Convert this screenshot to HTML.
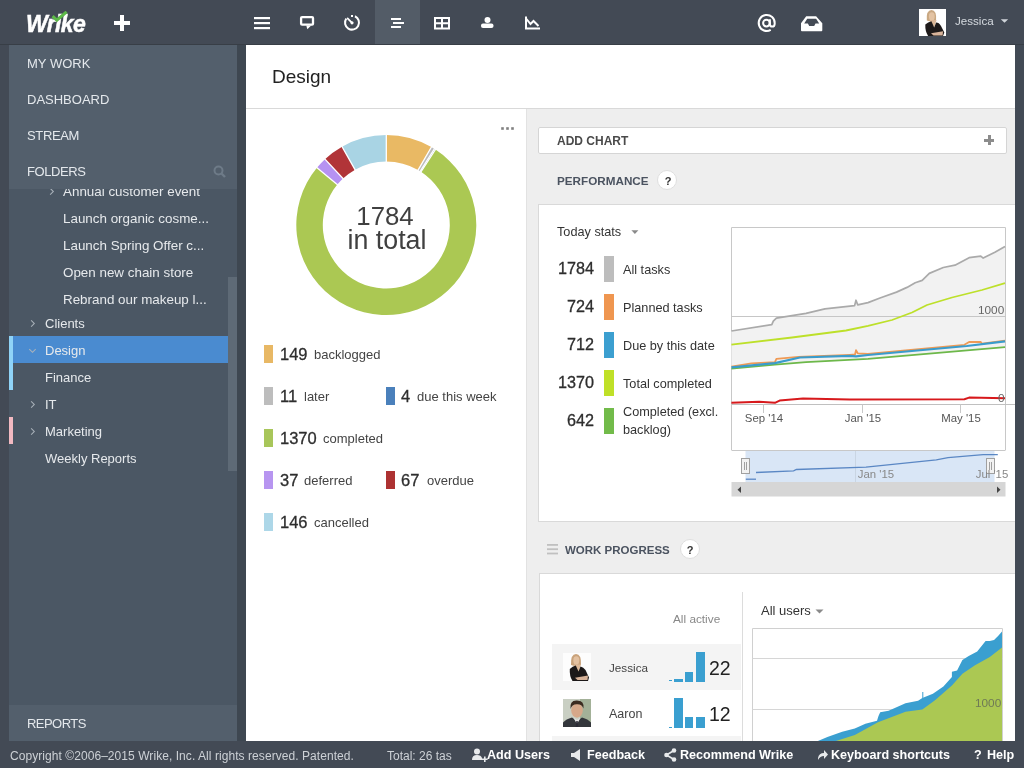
<!DOCTYPE html>
<html><head><meta charset="utf-8">
<style>
*{margin:0;padding:0;box-sizing:border-box}
html,body{width:1024px;height:768px;overflow:hidden;background:#434a55;font-family:"Liberation Sans",sans-serif}
.a{position:absolute;will-change:transform}
#top{left:0;top:0;width:1024px;height:45px;background:#434a55}
#side{left:9px;top:45px;width:228px;height:696px;background:#4b5764;overflow:hidden}
#strip{left:237px;top:45px;width:9px;height:696px;background:#3e4751}
#sidetop{left:0;top:0;width:228px;height:144px;background:#535f6c}
.sh{left:18px;color:#e4e8ec;font-size:13px;line-height:16px}
.fi{color:#e6e9ec;font-size:13.4px;line-height:16px;white-space:nowrap}
.chev{width:5px;height:5px;border-right:1px solid #aab2bb;border-bottom:1px solid #aab2bb;transform:rotate(-45deg)}
#main{left:246px;top:45px;width:769px;height:696px;background:#fff}
#foot{left:0;top:741px;width:1024px;height:27px;background:#434a55;color:#cdd1d6;font-size:12px;line-height:14px}
.fb{color:#fff;font-weight:bold;font-size:12.6px;line-height:14px}
</style></head><body>
<div id="strip" class="a"></div>
<div id="top" class="a">
  <div class="a" style="left:26px;top:9.7px;color:#fff;font:italic bold 23px/28px 'Liberation Sans',sans-serif;letter-spacing:-0.6px;-webkit-text-stroke:0.5px #fff">Wrike</div>
  <svg class="a" style="left:50px;top:11px" width="20" height="14" viewBox="0 0 20 14"><path d="M2.6 5.2 L6.8 9.2 L16.6 0.8" stroke="#5cb848" stroke-width="3" fill="none"/></svg>
  <div class="a" style="left:114px;top:21px;width:16px;height:4px;background:#fff"></div>
  <div class="a" style="left:120px;top:15px;width:4px;height:16px;background:#fff"></div>
  <!-- icons -->
  <div class="a" style="left:375px;top:0;width:45px;height:45px;background:#535c67"></div>
  <svg class="a" style="left:0;top:0" width="1024" height="45">
    <g fill="#fff">
      <rect x="254" y="17" width="16" height="2.2"/><rect x="254" y="22" width="16" height="2.2"/><rect x="254" y="27" width="16" height="2.2"/>
      <rect x="391" y="18" width="10" height="2"/><rect x="393" y="22" width="11" height="2"/><rect x="391" y="26" width="10" height="2"/>
      <circle cx="487.5" cy="20" r="3"/><rect x="481" y="23.5" width="12.5" height="4.5" rx="2"/>
    </g>
    <g fill="none" stroke="#fff" stroke-width="2">
      <rect x="301.1" y="17.05" width="11.9" height="7.6" rx="1" stroke-width="2.3"/>
      <path d="M354.96 16.26 A7 7 0 1 1 346.27 18.58"/>
      <rect x="435" y="18" width="14" height="10.5"/><path d="M435 23.2 h14 M442 18 v10.5"/>
      <path d="M526 16.5 v12 h14 M526.5 19 l4 5 l3 -3 l5 5"/>
    </g>
    <path d="M347.6 18.4 L351.8 22.6" stroke="#fff" stroke-width="1.8" stroke-linecap="round"/><circle cx="352" cy="22.8" r="1.6" fill="#fff"/>
    <rect x="351" y="15" width="2" height="2" fill="#fff"/><path d="M306.3 25.5 L307.3 29.2 L311.2 25.5z" fill="#fff"/>
    <path d="M806.2 16.2 H816.1 L822.3 23.3 V30.3 Q822.3 31.2 821.4 31.2 H801.9 Q801 31.2 801 30.3 V23.3z M807.2 18.7 L804.2 23.4 H807.9 L809.2 26 H814.2 L815.5 23.4 H819.2 L816.1 18.7z" fill="#fff" fill-rule="evenodd"/>
    <path d="M1000.8 19.2 h7.4 l-3.7 3.6z" fill="#d0d5da"/>
  </svg>
  <svg class="a" style="left:0;top:0" width="1024" height="45"><g fill="none" stroke="#fff" stroke-width="2"><path d="M770.7 29.9 A8 8 0 1 1 774.7 23.4 Q774.7 26.6 772.1 26.6 Q769.9 26.6 769.9 24.2 V19.3"/><circle cx="766.4" cy="23.1" r="3.3"/></g></svg>
  <svg class="a" style="left:919px;top:9px" width="27" height="27" viewBox="0 0 27 27"><rect width="27" height="27" fill="#fff"/><path d="M7.8 11.5 Q7 1 12.5 0.9 Q17.8 1 17.1 11.7 Q12.5 13.5 7.8 11.5z" fill="#c9a882"/><ellipse cx="12.8" cy="7.5" rx="2.9" ry="4.2" fill="#e3c3a3"/><path d="M10.5 11 H17.5 L15.2 19z" fill="#dcb898"/><path d="M6.3 15.5 Q9 13 12.4 12.3 L15.2 18.5 L17.1 13.6 Q20 13.6 22 17 L25.3 23.4 L24 27 H9.1 Q6 22 6.3 15.5z" fill="#1e1a1a"/><path d="M12 24.3 L24.1 22.3 L23.6 26.5 L14.5 26.5z" fill="#d7b39a"/></svg>
  <div class="a" style="left:955px;top:13.7px;color:#d6dbe0;font-size:11.6px;line-height:14px">Jessica</div>
</div>
<div id="side" class="a">
  <div class="a" style="left:0;top:144px;width:228px;height:516px;overflow:hidden">
    <div class="a fi" style="left:54px;top:-5.5px">Annual customer event</div>
    <div class="a chev" style="left:39px;top:0px"></div>
    <div class="a fi" style="left:54px;top:22.25px">Launch organic cosme...</div>
    <div class="a fi" style="left:54px;top:49px">Launch Spring Offer c...</div>
    <div class="a fi" style="left:54px;top:76px">Open new chain store</div>
    <div class="a fi" style="left:54px;top:103px">Rebrand our makeup l...</div>
    <div class="a chev" style="left:20px;top:132px"></div>
    <div class="a fi" style="left:36px;top:127.25px;font-size:13px">Clients</div>
    <div class="a" style="left:0;top:147px;width:219px;height:27px;background:#4a8bd0"></div>
    <div class="a" style="left:0;top:147px;width:4px;height:54px;background:#8fd3f7"></div>
    <div class="a chev" style="left:21px;top:157.5px;transform:rotate(45deg)"></div>
    <div class="a fi" style="left:36px;top:154.25px;font-size:13px">Design</div>
    <div class="a fi" style="left:36px;top:181px;font-size:13px">Finance</div>
    <div class="a chev" style="left:20px;top:213px"></div>
    <div class="a fi" style="left:36px;top:208px;font-size:13px">IT</div>
    <div class="a" style="left:0;top:228px;width:4px;height:27px;background:#f2b9c1"></div>
    <div class="a chev" style="left:20px;top:240px"></div>
    <div class="a fi" style="left:36px;top:235px;font-size:13px">Marketing</div>
    <div class="a fi" style="left:36px;top:262px;font-size:13px">Weekly Reports</div>
    <div class="a" style="left:219px;top:88px;width:9px;height:194px;background:#5e6a76"></div>
  </div>
  <div id="sidetop" class="a">
    <div class="a sh" style="top:10.8px">MY WORK</div>
    <div class="a sh" style="top:46.8px">DASHBOARD</div>
    <div class="a sh" style="top:82.8px;letter-spacing:-0.35px">STREAM</div>
    <div class="a sh" style="top:118.8px;letter-spacing:-0.4px">FOLDERS</div>
    <svg class="a" style="left:204px;top:120px" width="14" height="14"><circle cx="5.5" cy="5.5" r="4" stroke="#6e7b88" stroke-width="2" fill="none"/><path d="M8.5 8.5 l3.5 3.5" stroke="#6e7b88" stroke-width="2.4"/></svg>
  </div>
  <div class="a" style="left:0;top:660px;width:228px;height:36px;background:#535f6c">
    <div class="a sh" style="top:11.2px;letter-spacing:-0.55px">REPORTS</div>
  </div>
</div>
<div id="foot" class="a">
  <div class="a" style="left:10px;top:8px;letter-spacing:0.06px">Copyright ©2006–2015 Wrike, Inc. All rights reserved. Patented.</div>
  <div class="a" style="left:387px;top:8px">Total: 26 tas</div>
  <svg class="a" style="left:0;top:0" width="1024" height="27">
    <g fill="#e8eaec">
      <circle cx="477" cy="10.5" r="3"/><path d="M472 19 q0 -5 5 -5 q4 0 5 3 v2z"/><path d="M480 17.5 h4 v-2 h1.6 v2 h2 v1.6 h-2 v2 h-1.6 v-2 h-4z"/>
      <path d="M571 12 h3 l6 -4 v12 l-6 -4 h-3z"/>
      <circle cx="666.5" cy="14" r="2.3"/><circle cx="674" cy="9.5" r="2.3"/><circle cx="674" cy="18.5" r="2.3"/>
      <path d="M818 17 q1 -5 6 -5 v-3 l4 4.5 l-4 4.5 v-3 q-4 0 -6 4z"/>
    </g>
    <path d="M666.5 14 L674 9.5 M666.5 14 L674 18.5" stroke="#e8eaec" stroke-width="1.6"/>
  </svg>
  <div class="a fb" style="left:487px;top:7px">Add Users</div>
  <div class="a fb" style="left:587px;top:7px">Feedback</div>
  <div class="a fb" style="left:680px;top:7px">Recommend Wrike</div>
  <div class="a fb" style="left:831px;top:7px">Keyboard shortcuts</div>
  <div class="a fb" style="left:974px;top:7px">?</div>
  <div class="a fb" style="left:987px;top:7px">Help</div>
</div>
<div class="a" style="left:246px;top:45px;width:769px;height:696px;overflow:hidden;background:#fff"><div class="a" style="left:-246px;top:-45px;width:1024px;height:768px">
<div class="a" style="left:272.00px;top:65.52px;font-size:19px;line-height:22.80px;color:#222;white-space:nowrap;">Design</div>
<div class="a" style="left:246px;top:108px;width:769px;height:1px;background:#d9d9d9;"></div>
<div class="a" style="left:527px;top:109px;width:488px;height:632px;background:#eeeeee;"></div>
<div class="a" style="left:526px;top:109px;width:1px;height:632px;background:#e2e2e2;"></div>
<svg class="a" style="left:0;top:0" width="1024" height="768">
<rect x="501.2" y="127.2" width="2.6" height="2.6" fill="#808080"/><rect x="506.2" y="127.2" width="2.6" height="2.6" fill="#808080"/><rect x="511.2" y="127.2" width="2.6" height="2.6" fill="#808080"/><path d="M386.30 135.00 A90 90 0 0 1 431.39 147.11 L418.11 170.04 A63.5 63.5 0 0 0 386.30 161.50Z" fill="#e9b964"/>
<path d="M431.39 147.11 A90 90 0 0 1 434.37 148.92 L420.22 171.32 A63.5 63.5 0 0 0 418.11 170.04Z" fill="#bcbcbc"/>
<path d="M434.37 148.92 A90 90 0 0 1 435.44 149.60 L420.97 171.80 A63.5 63.5 0 0 0 420.22 171.32Z" fill="#4a81bc"/>
<path d="M435.44 149.60 A90 90 0 1 1 316.91 167.69 L337.34 184.56 A63.5 63.5 0 1 0 420.97 171.80Z" fill="#abc853"/>
<path d="M316.91 167.69 A90 90 0 0 1 324.94 159.16 L343.01 178.55 A63.5 63.5 0 0 0 337.34 184.56Z" fill="#b692f2"/>
<path d="M324.94 159.16 A90 90 0 0 1 342.03 146.64 L355.07 169.71 A63.5 63.5 0 0 0 343.01 178.55Z" fill="#b13438"/>
<path d="M342.03 146.64 A90 90 0 0 1 386.30 135.00 L386.30 161.50 A63.5 63.5 0 0 0 355.07 169.71Z" fill="#a9d4e4"/>
<path d="M386.30 162.50 L386.30 134.00" stroke="#fff" stroke-width="1.3"/>
<path d="M417.61 170.91 L431.89 146.25" stroke="#fff" stroke-width="1.3"/>
<path d="M419.69 172.16 L434.91 148.07" stroke="#fff" stroke-width="1.3"/>
<path d="M420.43 172.64 L435.99 148.76" stroke="#fff" stroke-width="1.3"/>
<path d="M338.11 185.20 L316.13 167.05" stroke="#fff" stroke-width="1.3"/>
<path d="M343.69 179.28 L324.26 158.43" stroke="#fff" stroke-width="1.3"/>
<path d="M355.56 170.58 L341.54 145.77" stroke="#fff" stroke-width="1.3"/>
</svg>
<div class="a" style="left:184.50px;width:400px;text-align:center;top:200.58px;font-size:25.8px;line-height:30.96px;color:#404040;white-space:nowrap;">1784</div>
<div class="a" style="left:186.50px;width:400px;text-align:center;top:223.93px;font-size:26.8px;line-height:32.16px;color:#404040;white-space:nowrap;">in total</div>
<div class="a" style="left:264px;top:345px;width:9px;height:18px;background:#e8b865;"></div>
<div class="a" style="left:279.80px;top:344.78px;font-size:16.5px;line-height:19.80px;color:#2e2e2e;white-space:nowrap;-webkit-text-stroke:0.3px #2e2e2e">149</div>
<div class="a" style="left:313.60px;top:347.20px;font-size:13px;line-height:15.60px;color:#444;white-space:nowrap;">backlogged</div>
<div class="a" style="left:264px;top:387px;width:9px;height:18px;background:#bdbdbd;"></div>
<div class="a" style="left:279.80px;top:386.78px;font-size:16.5px;line-height:19.80px;color:#2e2e2e;white-space:nowrap;-webkit-text-stroke:0.3px #2e2e2e">11</div>
<div class="a" style="left:304.20px;top:389.20px;font-size:13px;line-height:15.60px;color:#444;white-space:nowrap;">later</div>
<div class="a" style="left:386px;top:387px;width:9px;height:18px;background:#4a80bb;"></div>
<div class="a" style="left:400.50px;top:386.78px;font-size:16.5px;line-height:19.80px;color:#2e2e2e;white-space:nowrap;-webkit-text-stroke:0.3px #2e2e2e">4</div>
<div class="a" style="left:416.80px;top:389.20px;font-size:13px;line-height:15.60px;color:#444;white-space:nowrap;">due this week</div>
<div class="a" style="left:264px;top:429px;width:9px;height:18px;background:#a8c65a;"></div>
<div class="a" style="left:279.80px;top:428.78px;font-size:16.5px;line-height:19.80px;color:#2e2e2e;white-space:nowrap;-webkit-text-stroke:0.3px #2e2e2e">1370</div>
<div class="a" style="left:323.00px;top:431.20px;font-size:13px;line-height:15.60px;color:#444;white-space:nowrap;">completed</div>
<div class="a" style="left:264px;top:471px;width:9px;height:18px;background:#b795f0;"></div>
<div class="a" style="left:279.80px;top:470.78px;font-size:16.5px;line-height:19.80px;color:#2e2e2e;white-space:nowrap;-webkit-text-stroke:0.3px #2e2e2e">37</div>
<div class="a" style="left:304.20px;top:473.20px;font-size:13px;line-height:15.60px;color:#444;white-space:nowrap;">deferred</div>
<div class="a" style="left:386px;top:471px;width:9px;height:18px;background:#ad3232;"></div>
<div class="a" style="left:400.50px;top:470.78px;font-size:16.5px;line-height:19.80px;color:#2e2e2e;white-space:nowrap;-webkit-text-stroke:0.3px #2e2e2e">67</div>
<div class="a" style="left:426.50px;top:473.20px;font-size:13px;line-height:15.60px;color:#444;white-space:nowrap;">overdue</div>
<div class="a" style="left:264px;top:513px;width:9px;height:18px;background:#add7e8;"></div>
<div class="a" style="left:279.80px;top:512.78px;font-size:16.5px;line-height:19.80px;color:#2e2e2e;white-space:nowrap;-webkit-text-stroke:0.3px #2e2e2e">146</div>
<div class="a" style="left:313.60px;top:515.20px;font-size:13px;line-height:15.60px;color:#444;white-space:nowrap;">cancelled</div>
<div class="a" style="left:538px;top:127px;width:469px;height:27px;background:#fff;border:1px solid #d5d5d5;border-radius:2px;box-sizing:border-box"></div>
<div class="a" style="left:557.00px;top:134.04px;font-size:12px;line-height:14.40px;color:#4a4a4a;font-weight:bold;white-space:nowrap;">ADD CHART</div>
<div class="a" style="left:984px;top:138.5px;width:10px;height:3px;background:#8c8c8c;"></div>
<div class="a" style="left:987.5px;top:135px;width:3px;height:10px;background:#8c8c8c;"></div>
<div class="a" style="left:556.50px;top:174.43px;font-size:11.7px;line-height:14.04px;color:#4b5360;font-weight:bold;white-space:nowrap;">PERFORMANCE</div>
<div class="a" style="left:657px;top:170px;width:20px;height:20px;border-radius:50%;background:#fff;border:1px solid #dedede"></div>
<div class="a" style="left:467.60px;width:400px;text-align:center;top:174.79px;font-size:11px;line-height:13.20px;color:#333;font-weight:bold;white-space:nowrap;">?</div>
<div class="a" style="left:538px;top:204px;width:490px;height:318px;background:#fff;border:1px solid #d9d9d9;box-sizing:border-box"></div>
<div class="a" style="left:557.00px;top:225.48px;font-size:12.7px;line-height:15.24px;color:#333;white-space:nowrap;">Today stats</div>
<svg class="a" style="left:631px;top:230px" width="10" height="6"><path d="M0.4 0.3 h7 l-3.5 3.6z" fill="#8a8a8a"/></svg>
<div class="a" style="right:429.50px;top:259.27px;font-size:16.2px;line-height:19.44px;color:#2e2e2e;white-space:nowrap;-webkit-text-stroke:0.3px #2e2e2e">1784</div>
<div class="a" style="left:604px;top:256px;width:10px;height:26px;background:#bdbdbd;"></div>
<div class="a" style="left:623.40px;top:262.58px;font-size:12.7px;line-height:15.24px;color:#333;white-space:nowrap;">All tasks</div>
<div class="a" style="right:429.50px;top:297.27px;font-size:16.2px;line-height:19.44px;color:#2e2e2e;white-space:nowrap;-webkit-text-stroke:0.3px #2e2e2e">724</div>
<div class="a" style="left:604px;top:294px;width:10px;height:26px;background:#ef9650;"></div>
<div class="a" style="left:623.40px;top:300.58px;font-size:12.7px;line-height:15.24px;color:#333;white-space:nowrap;">Planned tasks</div>
<div class="a" style="right:429.50px;top:335.27px;font-size:16.2px;line-height:19.44px;color:#2e2e2e;white-space:nowrap;-webkit-text-stroke:0.3px #2e2e2e">712</div>
<div class="a" style="left:604px;top:332px;width:10px;height:26px;background:#3c9fd0;"></div>
<div class="a" style="left:623.40px;top:338.58px;font-size:12.7px;line-height:15.24px;color:#333;white-space:nowrap;">Due by this date</div>
<div class="a" style="right:429.50px;top:373.27px;font-size:16.2px;line-height:19.44px;color:#2e2e2e;white-space:nowrap;-webkit-text-stroke:0.3px #2e2e2e">1370</div>
<div class="a" style="left:604px;top:370px;width:10px;height:26px;background:#bfe028;"></div>
<div class="a" style="left:623.40px;top:376.58px;font-size:12.7px;line-height:15.24px;color:#333;white-space:nowrap;">Total completed</div>
<div class="a" style="right:429.50px;top:411.27px;font-size:16.2px;line-height:19.44px;color:#2e2e2e;white-space:nowrap;-webkit-text-stroke:0.3px #2e2e2e">642</div>
<div class="a" style="left:604px;top:408px;width:10px;height:26px;background:#72bb4a;"></div>
<div class="a" style="left:623.40px;top:405.18px;font-size:12.7px;line-height:15.24px;color:#333;white-space:nowrap;">Completed (excl.</div>
<div class="a" style="left:623.40px;top:422.88px;font-size:12.7px;line-height:15.24px;color:#333;white-space:nowrap;">backlog)</div>
<svg class="a" style="left:546px;top:543px" width="12" height="12"><g fill="#c0c0c0"><rect x="1" y="1" width="11" height="1.8"/><rect x="1" y="5.3" width="11" height="1.8"/><rect x="1" y="9.6" width="11" height="1.8"/></g></svg>
<div class="a" style="left:565.00px;top:543.62px;font-size:11.5px;line-height:13.80px;color:#4b5360;font-weight:bold;white-space:nowrap;">WORK PROGRESS</div>
<div class="a" style="left:679.5px;top:539px;width:20px;height:20px;border-radius:50%;background:#fff;border:1px solid #dedede"></div>
<div class="a" style="left:490.00px;width:400px;text-align:center;top:543.79px;font-size:11px;line-height:13.20px;color:#333;font-weight:bold;white-space:nowrap;">?</div>
<div class="a" style="left:538.5px;top:573px;width:490px;height:200px;background:#fff;border:1px solid #d9d9d9;box-sizing:border-box"></div>
<svg class="a" style="left:0;top:0" width="1024" height="768">
<path d="M731.5 450 V227.5 H1005.5 V450" fill="none" stroke="#c8c8c8" stroke-width="1"/>
<polygon points="731.4,331.0 771.8,324.7 773.3,321.2 776.4,318.1 806.0,313.4 824.9,308.8 854.6,305.6 856.0,300.2 857.7,304.8 868.0,302.6 880.0,298.0 896.5,292.1 907.0,287.4 915.2,282.7 922.2,280.4 929.3,273.4 943.3,267.5 955.0,265.2 969.1,257.7 980.8,256.2 983.2,258.1 994.9,252.3 1005.0,246.5 1005.0,347.2 868.0,358.9 806.0,362.2 774.9,364.7 731.4,368.6" fill="#f2f2f2"/>
<path d="M731.5 316.5 H1005.5" stroke="#c6c6c6" stroke-width="1"/>
<path d="M731.5 404.5 H1015" stroke="#c0c0c0" stroke-width="1"/>
<path d="M763.5 404.5 V413" stroke="#c8c8c8" stroke-width="1"/><path d="M862.5 404.5 V413" stroke="#c8c8c8" stroke-width="1"/><path d="M960.5 404.5 V413" stroke="#c8c8c8" stroke-width="1"/><polyline points="731.4,331.0 771.8,324.7 773.3,321.2 776.4,318.1 806.0,313.4 824.9,308.8 854.6,305.6 856.0,300.2 857.7,304.8 868.0,302.6 880.0,298.0 896.5,292.1 907.0,287.4 915.2,282.7 922.2,280.4 929.3,273.4 943.3,267.5 955.0,265.2 969.1,257.7 980.8,256.2 983.2,258.1 994.9,252.3 1005.0,246.5" fill="none" stroke="#aaaaaa" stroke-width="1.7" stroke-linejoin="round"/>
<polyline points="731.4,344.7 792.0,337.5 846.0,330.5 868.0,325.8 892.0,320.0 912.0,312.5 927.0,305.0 952.0,297.5 982.0,290.0 1005.0,283.2" fill="none" stroke="#bde02a" stroke-width="1.8" stroke-linejoin="round"/>
<polyline points="731.4,368.6 774.9,364.7 806.0,362.2 868.0,358.9 1005.0,347.2" fill="none" stroke="#6db84a" stroke-width="1.8" stroke-linejoin="round"/>
<polyline points="731.4,366.6 751.4,363.4 774.9,362.2 776.4,358.8 798.3,356.9 849.9,354.8 855.0,354.5 856.0,350.2 857.7,353.3 868.0,354.0 964.4,344.8 969.1,342.0 980.8,342.0 982.0,343.7 1005.0,340.6" fill="none" stroke="#ef9a55" stroke-width="1.8" stroke-linejoin="round"/>
<polyline points="731.4,367.3 774.9,363.1 799.9,357.5 849.9,355.9 856.0,356.4 868.0,355.0 966.8,346.0 1005.0,341.3" fill="none" stroke="#3a9ccc" stroke-width="2.2" stroke-linejoin="round"/>
<polyline points="731.4,402.8 759.2,401.7 774.9,402.8 779.6,400.6 803.0,398.6 849.9,399.4 964.4,399.2 969.1,397.6 1005.0,398.3" fill="none" stroke="#d7191c" stroke-width="2" stroke-linejoin="round"/>
<path d="M731.5 450.5 H1005.5" stroke="#c8c8c8" stroke-width="1"/>
<rect x="745.5" y="451" width="249" height="31" fill="#d9e6f6"/>
<path d="M855.5 451 V482" stroke="#c9d5e3" stroke-width="1"/>
<polyline points="756.0,472.5 793.6,470.8 796.4,469.5 866.0,467.1 936.3,459.8 948.0,457.6 983.2,454.6 997.8,454.6" fill="none" stroke="#5a87c4" stroke-width="1.3"/>
<path d="M745.8 479.2 H756" stroke="#5a87c4" stroke-width="1.3"/>
<rect x="731.5" y="482" width="274" height="14.5" fill="#d6d6d6"/>
<path d="M737.5 489.8 l3.5 -3.2 v6.4z" fill="#444"/><path d="M1000.5 489.8 l-3.5 -3.2 v6.4z" fill="#444"/>
<rect x="741.5" y="458.5" width="8" height="15" fill="#f2f2f2" stroke="#a0a0a0" stroke-width="1"/><path d="M744.5 462 v8 M746.5 462 v8" stroke="#a0a0a0" stroke-width="1"/>
<rect x="986.5" y="458.5" width="8" height="15" fill="#f2f2f2" stroke="#a0a0a0" stroke-width="1"/><path d="M989.5 462 v8 M991.5 462 v8" stroke="#a0a0a0" stroke-width="1"/>
</svg>
<div class="a" style="left:563.50px;width:400px;text-align:center;top:412.41px;font-size:11.4px;line-height:13.68px;color:#555;white-space:nowrap;">Sep '14</div>
<div class="a" style="left:662.50px;width:400px;text-align:center;top:412.41px;font-size:11.4px;line-height:13.68px;color:#555;white-space:nowrap;">Jan '15</div>
<div class="a" style="left:760.50px;width:400px;text-align:center;top:412.41px;font-size:11.4px;line-height:13.68px;color:#555;white-space:nowrap;">May '15</div>
<div class="a" style="right:19.50px;top:303.13px;font-size:11.8px;line-height:14.16px;color:#666;white-space:nowrap;">1000</div>
<div class="a" style="right:19.50px;top:391.03px;font-size:11.8px;line-height:14.16px;color:#666;white-space:nowrap;">0</div>
<div class="a" style="left:676.00px;width:400px;text-align:center;top:467.71px;font-size:11.4px;line-height:13.68px;color:#888;white-space:nowrap;">Jan '15</div>
<div class="a" style="left:791.50px;width:400px;text-align:center;top:467.71px;font-size:11.4px;line-height:13.68px;color:#888;white-space:nowrap;">Jul '15</div>
<div class="a" style="right:303.50px;top:611.83px;font-size:11.8px;line-height:14.16px;color:#888;white-space:nowrap;">All active</div>
<div class="a" style="left:742px;top:592px;width:1px;height:160px;background:#dcdcdc;"></div>
<div class="a" style="left:552px;top:644px;width:189px;height:45.5px;background:#f4f4f4;"></div>
<div class="a" style="left:552px;top:736px;width:189px;height:10px;background:#f4f4f4;"></div>
<div class="a" style="left:609.00px;top:661.33px;font-size:11.7px;line-height:14.04px;color:#444;white-space:nowrap;">Jessica</div>
<div class="a" style="left:609.00px;top:707.07px;font-size:12.5px;line-height:15.00px;color:#444;white-space:nowrap;">Aaron</div>
<div class="a" style="left:669px;top:680px;width:3px;height:1.2px;background:#3a9fd0;"></div>
<div class="a" style="left:674.3px;top:679px;width:8.7px;height:3px;background:#3a9fd0;"></div>
<div class="a" style="left:685.4px;top:672px;width:8.2px;height:10px;background:#3a9fd0;"></div>
<div class="a" style="left:696.3px;top:652px;width:8.7px;height:30px;background:#3a9fd0;"></div>
<div class="a" style="left:669px;top:726.5px;width:3px;height:1.2px;background:#3a9fd0;"></div>
<div class="a" style="left:674.3px;top:698px;width:8.7px;height:29.6px;background:#3a9fd0;"></div>
<div class="a" style="left:685.4px;top:716.5px;width:8.2px;height:11.1px;background:#3a9fd0;"></div>
<div class="a" style="left:696.3px;top:716.5px;width:8.7px;height:11.1px;background:#3a9fd0;"></div>
<div class="a" style="right:293.50px;top:657.34px;font-size:19.5px;line-height:23.40px;color:#222;white-space:nowrap;">22</div>
<div class="a" style="right:293.50px;top:703.04px;font-size:19.5px;line-height:23.40px;color:#222;white-space:nowrap;">12</div>
<svg class="a" style="left:563px;top:653px" width="28" height="28"><rect width="28" height="28" fill="#fdfdfd"/><path d="M8 12 Q7.5 1 13 1 Q18.5 1 18 12 Q13 14 8 12z" fill="#c9a27a"/><ellipse cx="13.3" cy="7.5" rx="3" ry="4.2" fill="#e3c1a1"/><path d="M11 11.5 H18 L15.5 19z" fill="#dcb898"/><path d="M6.8 16 Q9.5 13 12.8 12.5 L15.5 18.5 L17.5 13.5 Q20.5 14 22.5 17 L26 24.5 L25 28 H9.5 Q6.3 23 6.8 16z" fill="#1c1818"/><path d="M12 24.8 L25 22.5 L24.5 27 L14.5 27z" fill="#d5b096"/></svg>
<svg class="a" style="left:563px;top:699px" width="28" height="28"><rect width="28" height="28" fill="#c9cfc3"/><rect x="17" width="11" height="28" fill="#a3b198"/><ellipse cx="14" cy="11.5" rx="5.8" ry="7.2" fill="#d6a88a"/><path d="M7.5 10 Q6.5 1 14 1.5 Q21.5 1.5 20.5 9.5 Q19 5 14 5.2 Q9 5 7.5 10z" fill="#3b2b20"/><path d="M0 28 V23.5 Q3 20 9 18.5 L14 22 L19 18.5 Q25 20 28 23.5 V28z" fill="#33363b"/><path d="M10.5 19 L14 25 L17.5 19 L14 21z" fill="#e6e6e6"/><path d="M13.3 22 h1.4 l0.6 6 h-2.6z" fill="#2a2a36"/></svg>
<div class="a" style="left:761.00px;top:603.20px;font-size:13px;line-height:15.60px;color:#333;white-space:nowrap;">All users</div>
<svg class="a" style="left:815px;top:609px" width="10" height="6"><path d="M0.5 0.5 h8 l-4 4z" fill="#8a8a8a"/></svg>
<svg class="a" style="left:0;top:0" width="1024" height="768">
<path d="M752.5 745 V628.5 H1002.5 V745" fill="none" stroke="#d0d0d0" stroke-width="1"/>
<path d="M752.5 658.5 H1002.5 M752.5 709.5 H1002.5" stroke="#d6d6d6" stroke-width="1"/>
<polygon points="817.9,741.0 827.4,737.0 842.2,731.8 854.8,728.6 865.4,723.8 877.0,720.8 878.5,716.0 880.2,712.2 888.6,710.7 905.5,703.3 918.1,700.8 922.3,698.0 932.9,693.8 943.4,686.4 951.9,677.0 951.9,671.7 957.1,670.6 962.4,660.1 968.7,655.9 977.2,651.6 985.6,641.1 989.8,641.1 994.0,640.0 998.3,635.8 1002.0,631.6 1002,745" fill="#3a9fd0"/>
<polygon points="835.9,741.0 854.8,735.0 878.0,722.3 905.5,711.8 922.3,709.6 935.0,700.2 951.9,685.4 962.4,673.8 975.0,665.3 989.8,656.9 1002.0,647.4 1002,745" fill="#abc853"/>
<path d="M922.8 698 V692" stroke="#3a9fd0" stroke-width="1"/>
</svg>
<div class="a" style="right:22.50px;top:696.33px;font-size:11.8px;line-height:14.16px;color:#6f7a55;white-space:nowrap;">1000</div>
</div></div>
<div class="a" style="left:1015px;top:45px;width:9px;height:696px;background:#424a55"></div>
<div class="a" style="left:0;top:44px;width:1024px;height:1px;background:#383e46"></div>
</body></html>
